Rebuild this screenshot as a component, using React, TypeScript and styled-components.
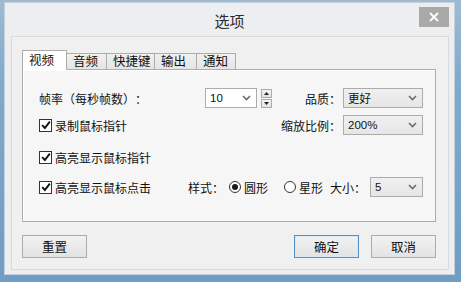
import React from "react";
import styled, { createGlobalStyle } from "styled-components";

const Global = createGlobalStyle`
  html, body { margin: 0; padding: 0; }
  body {
    width: 461px;
    height: 282px;
    overflow: hidden;
    font-family: "Liberation Sans", "Noto Sans CJK SC", sans-serif;
    background: linear-gradient(180deg, #9fbbd2 0%, #7eaacd 30%, #6f9dc3 100%);
  }
`;

const Desk = styled.div`
  width: 461px;
  height: 282px;
  padding: 2px 6px 0 4px;
  box-sizing: border-box;
`;

const Win = styled.div`
  position: relative;
  height: 273px;
  background: #eceef0;
  border: 1px solid #c4d0db;
  box-sizing: border-box;
  display: flex;
  flex-direction: column;
`;

const TitleBar = styled.div`
  height: 32px;
  display: flex;
  align-items: center;
  justify-content: center;
  font-family: "Noto Sans CJK SC", sans-serif;
  font-size: 15px;
  color: #2b2b2b;
  padding-top: 1px;
`;

const Close = styled.div`
  position: absolute;
  top: 4px;
  right: 5px;
  width: 30px;
  height: 20px;
  background: #a9a9a9;
  display: flex;
  align-items: center;
  justify-content: center;
`;

const Client = styled.div`
  flex: 1;
  margin: 0 5px 4px 6px;
  background: #f0f0f0;
  border: 1px solid #d6dbe0;
  padding: 13px 12px 0 10px;
  display: flex;
  flex-direction: column;
`;

const Tabs = styled.div`
  display: flex;
  align-items: flex-end;
  height: 20px;
  position: relative;
  z-index: 1;
  margin-bottom: -1px;
`;

const Tab = styled.div<{ $active?: boolean; $w: number }>`
  width: ${(p) => p.$w}px;
  height: ${(p) => (p.$active ? 20 : 17)}px;
  box-sizing: border-box;
  border: 1px solid #acacac;
  border-bottom: ${(p) => (p.$active ? "none" : "1px solid #acacac")};
  margin-left: ${(p) => (p.$active ? 0 : -1)}px;
  background: ${(p) => (p.$active ? "#ffffff" : "linear-gradient(#f0f0f0, #e5e5e5)")};
  font-family: "Noto Sans CJK SC", sans-serif;
  font-size: 12.5px;
  color: #111;
  display: flex;
  align-items: center;
  padding-left: 6px;
  line-height: 1;
`;

const Panel = styled.div`
  height: 153px;
  box-sizing: border-box;
  border: 1px solid #adadad;
  background: #f6f6f6;
  box-shadow: inset 1px 1px 0 #ffffff;
  padding: 18px 12px 0 16px;
  display: flex;
  flex-direction: column;
`;

const Row = styled.div<{ $top?: number }>`
  display: flex;
  align-items: center;
  height: 20px;
  margin-top: ${(p) => p.$top ?? 0}px;
`;

const Text = styled.span<{ $w?: number; $ml?: number }>`
  font-family: "Noto Sans CJK SC", sans-serif;
  font-size: 12px;
  color: #111;
  white-space: nowrap;
  width: ${(p) => (p.$w ? `${p.$w}px` : "auto")};
  margin-left: ${(p) => p.$ml ?? 0}px;
  flex-shrink: 0;
`;

// full-width punctuation box, so the mark keeps its whole em like on Windows
const Punct = styled.span<{ $open?: boolean }>`
  display: inline-block;
  width: 1em;
  text-align: ${(p) => (p.$open ? "right" : "left")};
`;

const Spacer = styled.div`
  flex: 1;
`;

const Combo = styled.div<{ $w: number; $edit?: boolean; $ml?: number }>`
  width: ${(p) => p.$w}px;
  height: 20px;
  box-sizing: border-box;
  border: 1px solid #acacac;
  background: ${(p) => (p.$edit ? "#ffffff" : "linear-gradient(#f0f0f0, #e6e6e6)")};
  margin-left: ${(p) => p.$ml ?? 0}px;
  display: flex;
  align-items: center;
  padding: 0 5px 0 4px;
  font-size: 11.5px;
  color: #111;
  flex-shrink: 0;
`;

const ComboValue = styled.span`
  flex: 1;
  font-family: "Liberation Sans", "Noto Sans CJK SC", sans-serif;
`;

const Chevron = () => (
  <svg width="9" height="6" viewBox="0 0 9 6">
    <path d="M1 1 L4.5 4.5 L8 1" fill="none" stroke="#6b6b6b" strokeWidth="1.6" />
  </svg>
);

const SpinBox = styled.div`
  display: flex;
  flex-direction: column;
  gap: 1px;
  margin-left: 4px;
`;

const SpinBtn = styled.div`
  width: 11px;
  height: 9px;
  box-sizing: border-box;
  border: 1px solid #acacac;
  background: linear-gradient(#f4f4f4, #e2e2e2);
  display: flex;
  align-items: center;
  justify-content: center;
`;

const Check = styled.div`
  width: 13px;
  height: 13px;
  box-sizing: border-box;
  border: 1px solid #333;
  background: #fff;
  display: flex;
  align-items: center;
  justify-content: center;
  margin-right: 3px;
  flex-shrink: 0;
`;

const CheckItem = styled.div<{ $w?: number }>`
  display: flex;
  align-items: center;
  width: ${(p) => (p.$w ? `${p.$w}px` : "auto")};
  flex-shrink: 0;
`;

const Radio = styled.div<{ $on?: boolean; $ml?: number }>`
  width: 12px;
  height: 12px;
  box-sizing: border-box;
  border-radius: 50%;
  border: 1px solid #333;
  background: #fff;
  margin-left: ${(p) => p.$ml ?? 0}px;
  margin-right: 3px;
  display: flex;
  align-items: center;
  justify-content: center;
  flex-shrink: 0;
  &::after {
    content: "";
    display: ${(p) => (p.$on ? "block" : "none")};
    width: 6px;
    height: 6px;
    border-radius: 50%;
    background: #1a1a1a;
  }
`;

const Buttons = styled.div`
  display: flex;
  align-items: center;
  margin-top: 13px;
`;

const Button = styled.div<{ $primary?: boolean; $ml?: number }>`
  width: 65px;
  height: 23px;
  box-sizing: border-box;
  border: 1px solid ${(p) => (p.$primary ? "#5b8fc4" : "#acacac")};
  background: linear-gradient(#f2f2f2, #e3e3e3);
  box-shadow: ${(p) => (p.$primary ? "inset 0 0 0 1px #d6e7f7" : "none")};
  margin-left: ${(p) => p.$ml ?? 0}px;
  display: flex;
  align-items: center;
  justify-content: center;
  font-family: "Noto Sans CJK SC", sans-serif;
  font-size: 12.5px;
  color: #111;
`;

const CheckMark = () => (
  <svg width="10" height="10" viewBox="0 0 10 10">
    <path d="M1.2 5.2 L3.9 8 L8.8 1.6" fill="none" stroke="#111" strokeWidth="1.9" />
  </svg>
);

const Tri = ({ up }: { up?: boolean }) => (
  <svg width="5" height="3" viewBox="0 0 5 3">
    <path d={up ? "M0 3 L2.5 0 L5 3 Z" : "M0 0 L2.5 3 L5 0 Z"} fill="#222" />
  </svg>
);

const Colon = () => <Punct>：</Punct>;

export default function App() {
  return (
    <Desk>
      <Global />
      <Win>
        <TitleBar>选项</TitleBar>
        <Close>
          <svg width="10" height="10" viewBox="0 0 10 10">
            <path d="M1 1 L9 9 M9 1 L1 9" stroke="#fff" strokeWidth="1.8" />
          </svg>
        </Close>
        <Client>
          <Tabs>
            <Tab $active $w={45}>视频</Tab>
            <Tab $w={41}>音频</Tab>
            <Tab $w={49}>快捷键</Tab>
            <Tab $w={43}>输出</Tab>
            <Tab $w={40}>通知</Tab>
          </Tabs>
          <Panel>
            <Row>
              <Text $w={166}>
                帧率<Punct $open>（</Punct>每秒帧数<Punct>）</Punct><Colon />
              </Text>
              <Combo $w={52} $edit>
                <ComboValue>10</ComboValue>
                <Chevron />
              </Combo>
              <SpinBox>
                <SpinBtn><Tri up /></SpinBtn>
                <SpinBtn><Tri /></SpinBtn>
              </SpinBox>
              <Spacer />
              <Text>品质<Colon /></Text>
              <Combo $w={80} $ml={2}>
                <ComboValue>更好</ComboValue>
                <Chevron />
              </Combo>
            </Row>
            <Row $top={7}>
              <CheckItem>
                <Check><CheckMark /></Check>
                <Text>录制鼠标指针</Text>
              </CheckItem>
              <Spacer />
              <Text>缩放比例<Colon /></Text>
              <Combo $w={80} $ml={2}>
                <ComboValue>200%</ComboValue>
                <Chevron />
              </Combo>
            </Row>
            <Row $top={12}>
              <CheckItem>
                <Check><CheckMark /></Check>
                <Text>高亮显示鼠标指针</Text>
              </CheckItem>
            </Row>
            <Row $top={10}>
              <CheckItem $w={149}>
                <Check><CheckMark /></Check>
                <Text>高亮显示鼠标点击</Text>
              </CheckItem>
              <Text>样式<Colon /></Text>
              <Radio $on $ml={5} />
              <Text>圆形</Text>
              <Radio $ml={16} />
              <Text>星形</Text>
              <Text $ml={7}>大小<Colon /></Text>
              <Spacer />
              <Combo $w={53}>
                <ComboValue>5</ComboValue>
                <Chevron />
              </Combo>
            </Row>
          </Panel>
          <Buttons>
            <Button>重置</Button>
            <Spacer />
            <Button $primary>确定</Button>
            <Button $ml={12}>取消</Button>
          </Buttons>
        </Client>
      </Win>
    </Desk>
  );
}
